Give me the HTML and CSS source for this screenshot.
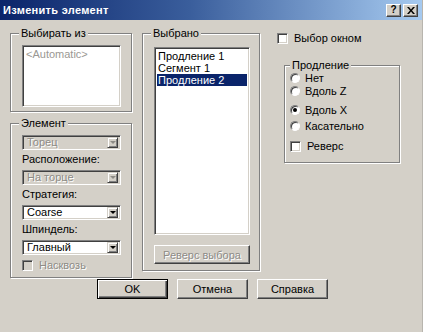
FILE: index.html
```html
<!DOCTYPE html>
<html lang="ru">
<head>
    <meta charset="UTF-8">
    <title>Изменить элемент</title>
    <link rel="stylesheet" href="styles.css">
</head>
<body>
    <div class="window">
        <div class="titlebar">
            <span class="title">Изменить элемент</span>
            <div class="title-buttons">
                <span class="tbtn">?</span>
                <span class="tbtn tbtn-close">
                    <svg width="8" height="7" viewBox="0 0 8 7"><path d="M0 0h2l2 2.5L6 0h2L5 3.5 8 7H6L4 4.5 2 7H0l3-3.5z" fill="#000"/></svg>
                </span>
            </div>
        </div>

        <div class="content">
            <div class="col col-left">
                <fieldset class="group group-source">
                    <legend>Выбирать из</legend>
                    <div class="listbox source-list">
                        <div class="item muted">&lt;Automatic&gt;</div>
                    </div>
                </fieldset>

                <fieldset class="group group-element">
                    <legend>Элемент</legend>
                    <div class="combo disabled">
                        <span class="combo-text">Торец</span>
                        <span class="combo-btn"><i class="arrow"></i></span>
                    </div>
                    <div class="field-label">Расположение:</div>
                    <div class="combo disabled">
                        <span class="combo-text">На торце</span>
                        <span class="combo-btn"><i class="arrow"></i></span>
                    </div>
                    <div class="field-label">Стратегия:</div>
                    <div class="combo">
                        <span class="combo-text">Coarse</span>
                        <span class="combo-btn"><i class="arrow"></i></span>
                    </div>
                    <div class="field-label">Шпиндель:</div>
                    <div class="combo">
                        <span class="combo-text">Главный</span>
                        <span class="combo-btn"><i class="arrow"></i></span>
                    </div>
                    <div class="check disabled through-check">
                        <span class="box"></span>
                        <span class="check-text">Насквозь</span>
                    </div>
                </fieldset>
            </div>

            <div class="col col-mid">
                <fieldset class="group group-selected">
                    <legend>Выбрано</legend>
                    <div class="listbox selected-list">
                        <div class="item">Продление 1</div>
                        <div class="item">Сегмент 1</div>
                        <div class="item active">Продление 2</div>
                    </div>
                    <div class="btn disabled reverse-btn">Реверс выбора</div>
                </fieldset>
            </div>

            <div class="col col-right">
                <div class="check window-check">
                    <span class="box"></span>
                    <span class="check-text">Выбор окном</span>
                </div>

                <fieldset class="group group-ext">
                    <legend>Продление</legend>
                    <div class="radio r1"><span class="dot"></span><span class="radio-text">Нет</span></div>
                    <div class="radio r2"><span class="dot"></span><span class="radio-text">Вдоль Z</span></div>
                    <div class="radio r3"><span class="dot checked"><i></i></span><span class="radio-text">Вдоль X</span></div>
                    <div class="radio r4"><span class="dot"></span><span class="radio-text">Касательно</span></div>
                    <div class="check reverse-check">
                        <span class="box"></span>
                        <span class="check-text">Реверс</span>
                    </div>
                </fieldset>
            </div>
        </div>

        <div class="footer">
            <div class="btn btn-default">OK</div>
            <div class="btn">Отмена</div>
            <div class="btn">Справка</div>
        </div>
    </div>
</body>
</html>
```

FILE: styles.css
```css
body {
    margin: 0;
    background: #fff;
    font-family: "Liberation Sans", Arial, sans-serif;
    font-size: 11px;
    color: #000;
}
.window {
    width: 422px;
    height: 332px;
    background: #d4d0c8;
    border-right: 1px solid #b8b5ae;
    display: flex;
    flex-direction: column;
}
.titlebar {
    height: 20px;
    background: linear-gradient(90deg, #0a246a 0%, #3a5e9c 45%, #a6caf0 100%);
    display: flex;
    align-items: center;
    padding: 0 4px 0 3px;
}
.title {
    flex: 1;
    color: #fff;
    font-weight: bold;
    letter-spacing: 0.3px;
}
.title-buttons {
    display: flex;
    gap: 2px;
}
.tbtn {
    width: 15px;
    height: 13px;
    background: #d4d0c8;
    border: 1px solid;
    border-color: #fff #404040 #404040 #fff;
    box-shadow: inset -1px -1px #808080;
    box-sizing: border-box;
    display: flex;
    align-items: center;
    justify-content: center;
    font-weight: bold;
    font-size: 10px;
    line-height: 10px;
}

.content {
    display: flex;
    padding-left: 10px;
    height: 251px;
}
.col-left {
    width: 122px;
}
.col-mid {
    width: 118px;
    margin-left: 10px;
}
.col-right {
    margin-left: 17px;
}

/* etched group frames */
.group {
    margin: 0;
    border: 1px solid #808080;
    box-shadow: 1px 1px 0 #fff, inset 1px 1px 0 #fff;
    box-sizing: border-box;
    padding: 0;
    min-width: 0;
}
.group legend {
    padding: 0 2px;
    margin-left: -3px;
    line-height: 13px;
    background: #d4d0c8;
}
.group-source {
    margin-top: 7px;
    padding: 0 10px 4px 11px;
}
.group-element {
    margin-top: 5px;
    padding: 0 10px 6px 11px;
}
.group-selected {
    margin-top: 7px;
    height: 244px;
    padding: 0 9px 0 11px;
}
.group-ext {
    margin-top: 15px;
    margin-left: 7px;
    width: 116px;
    padding: 0 4px 10px 5px;
}
.group-ext legend {
    margin-left: 0;
}

/* sunken boxes */
.listbox, .combo, .box {
    border: 1px solid;
    border-color: #808080 #fff #fff #808080;
    box-shadow: inset 1px 1px #404040, inset -1px -1px #d4d0c8;
    background: #fff;
    box-sizing: border-box;
}
.listbox {
    padding: 2px;
}
.source-list {
    margin-top: 5px;
    height: 62px;
}
.selected-list {
    margin-top: 7px;
    height: 188px;
}
.item {
    height: 12px;
    line-height: 12px;
    padding-left: 1px;
    white-space: nowrap;
}
.item.active {
    background: #0a246a;
    color: #fff;
}
.muted {
    color: #9a9893;
}

.combo {
    height: 15px;
    display: flex;
    align-items: center;
    padding: 2px;
}
.combo-text {
    flex: 1;
    padding-left: 2px;
    line-height: 11px;
}
.combo-btn {
    width: 11px;
    height: 11px;
    box-sizing: border-box;
    background: #d4d0c8;
    border: 1px solid;
    border-color: #d4d0c8 #404040 #404040 #d4d0c8;
    box-shadow: inset 1px 1px #fff, inset -1px -1px #808080;
    display: flex;
    align-items: center;
    justify-content: center;
}
.arrow {
    width: 0;
    height: 0;
    border-left: 3px solid transparent;
    border-right: 3px solid transparent;
    border-top: 3px solid #000;
}
.combo.disabled {
    background: #d4d0c8;
}
.combo.disabled .combo-text,
.disabled .check-text,
.btn.disabled {
    color: #8d8b86;
    text-shadow: 1px 1px 0 #fff;
}
.combo.disabled .arrow {
    border-top-color: #8d8b86;
}
.group-element legend {
    margin-bottom: 5px;
}
.field-label {
    line-height: 12px;
    margin: 3px 0 5px;
}

/* checkboxes and radios */
.check, .radio {
    display: flex;
    align-items: center;
    height: 12px;
}
.box {
    width: 11px;
    height: 11px;
}
.disabled .box {
    background: #d4d0c8;
}
.check-text {
    margin-left: 6px;
}
.through-check {
    margin-top: 4px;
}
.window-check {
    margin-top: 12px;
}
.dot {
    width: 10px;
    height: 10px;
    border-radius: 50%;
    border: 1px solid;
    border-color: #808080 #fff #fff #808080;
    box-shadow: inset 1px 1px #404040;
    background: #fff;
    box-sizing: border-box;
    display: flex;
    align-items: center;
    justify-content: center;
}
.dot.checked i {
    width: 4px;
    height: 4px;
    border-radius: 50%;
    background: #000;
}
.radio-text {
    margin-left: 5px;
}
.r2 { margin-top: 1px; }
.r3 { margin-top: 7px; }
.r4 { margin-top: 4px; }
.reverse-check {
    margin-top: 8px;
}

/* push buttons */
.btn {
    height: 19px;
    box-sizing: border-box;
    border: 1px solid;
    border-color: #fff #404040 #404040 #fff;
    box-shadow: inset -1px -1px #808080, inset 1px 1px #d4d0c8;
    display: flex;
    align-items: center;
    justify-content: center;
}
.reverse-btn {
    margin-top: 10px;
}
.footer {
    display: flex;
    gap: 9px;
    padding: 8px 0 0 97px;
}
.footer .btn {
    width: 71px;
    height: 20px;
}
.btn-default {
    border: 1px solid #000;
    box-shadow: inset 1px 1px #fff, inset -1px -1px #404040, inset -2px -2px #808080;
}
```
